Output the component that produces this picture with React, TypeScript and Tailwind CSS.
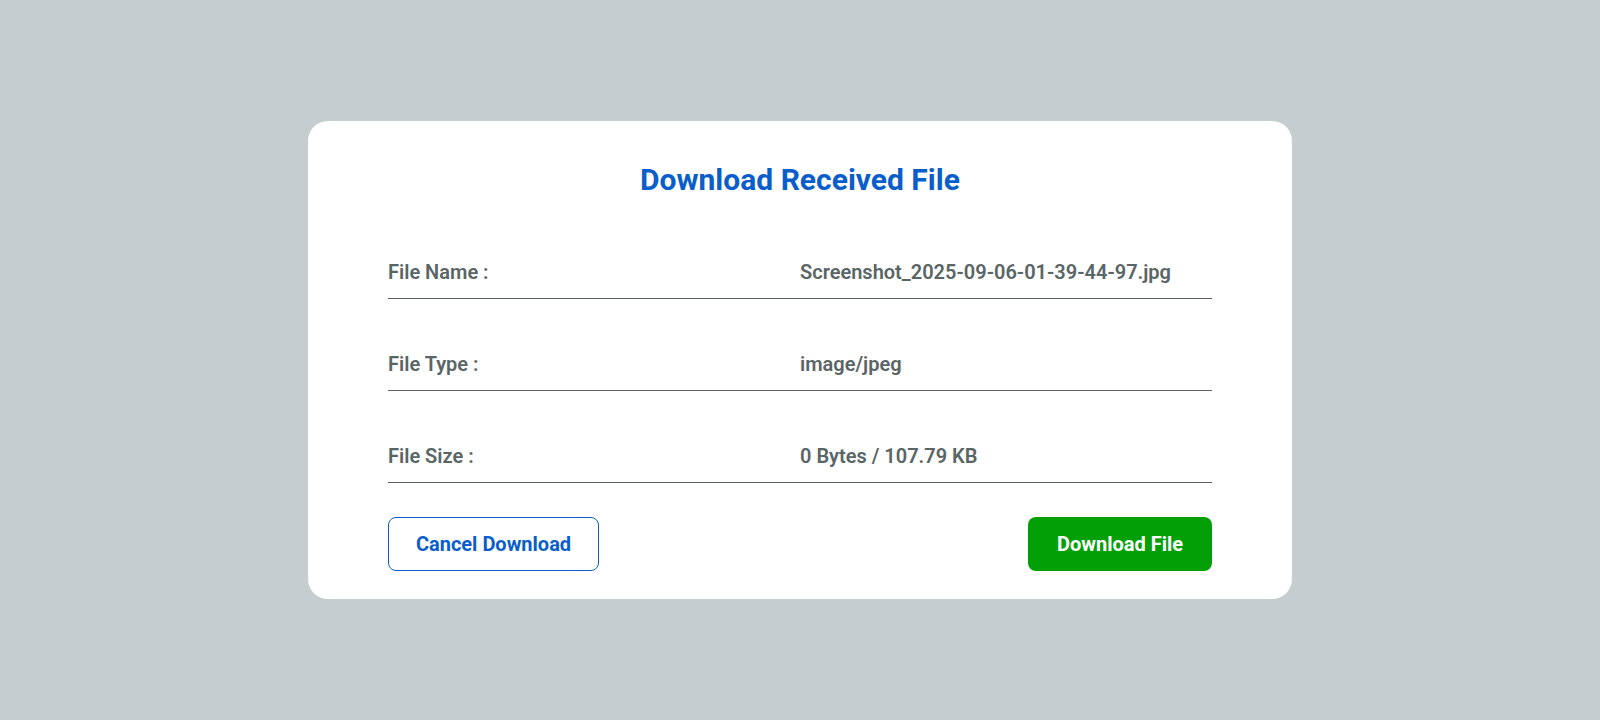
import React from 'react';

const rows = [
  { label: 'File Name :', value: 'Screenshot_2025-09-06-01-39-44-97.jpg' },
  { label: 'File Type :', value: 'image/jpeg' },
  { label: 'File Size :', value: '0 Bytes / 107.79 KB' },
];

export default function App() {
  return (
    <div
      className="w-full h-[720px] bg-[#c5cdcf] flex justify-center pt-[121px]"
      style={{ fontFamily: 'Roboto, "Liberation Sans", sans-serif' }}
    >
      <div className="w-[984px] h-[478px] bg-white rounded-[20px] px-[80px] pt-[41px]">
        <h1 className="text-[30px] leading-[36px] font-bold text-[#0a5ecb] text-center mb-[9px]">
          Download Received File
        </h1>
        {rows.map((r) => (
          <div
            key={r.label}
            className="grid grid-cols-2 pt-[51px] pb-[12px] border-b border-[#5c6667] text-[20px] leading-[28px] font-semibold text-[#5a6566]"
          >
            <span>{r.label}</span>
            <span>{r.value}</span>
          </div>
        ))}
        <div className="flex justify-between mt-[34px]">
          <button className="w-[211px] h-[54px] rounded-[8px] border border-[#0a5ecb] text-[#0a5ecb] text-[20px] font-bold bg-white">
            Cancel Download
          </button>
          <button className="w-[184px] h-[54px] rounded-[8px] bg-[#029f07] text-white text-[20px] font-bold">
            Download File
          </button>
        </div>
      </div>
    </div>
  );
}
